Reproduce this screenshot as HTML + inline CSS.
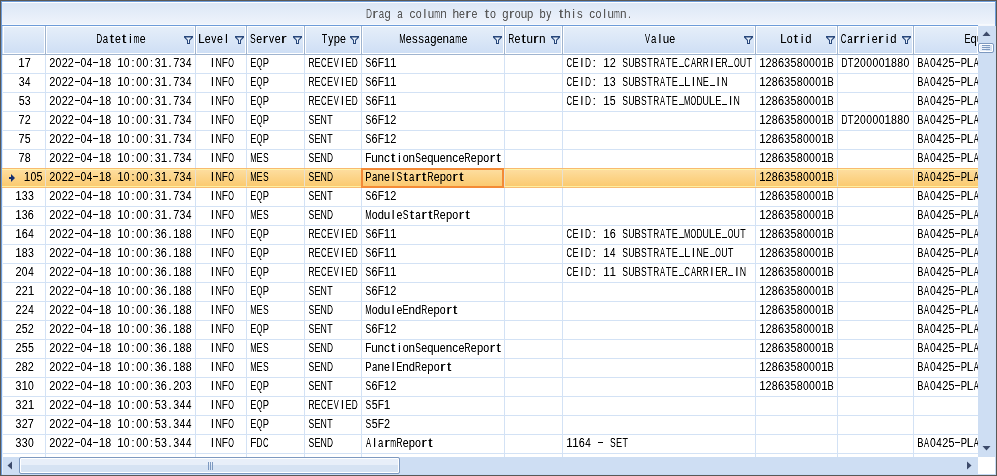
<!DOCTYPE html>
<html><head><meta charset="utf-8"><style>
html,body{margin:0;padding:0;background:#fff;width:997px;height:476px;overflow:hidden}
#r{position:relative;width:997px;height:476px;overflow:hidden}
#r div,#r svg{position:absolute;box-sizing:content-box}
#tx{position:absolute;left:0;top:0;overflow:hidden;filter:grayscale(1)}
</style></head><body><div id="r">
<div style="left:2px;top:2px;width:993px;height:1px;background:#ffffff;"></div>
<div style="left:2px;top:3px;width:993px;height:21px;background:linear-gradient(#dce7f6,#eef3fb);"></div>
<div style="left:2px;top:24px;width:993px;height:1px;background:#f6f9fd;"></div>
<div style="left:2px;top:25px;width:976px;height:1px;background:#6d9cd9;"></div>
<div style="left:3px;top:26px;width:42px;height:28px;background:#ffffff;"></div>
<div style="left:4px;top:27px;width:40px;height:26px;background:linear-gradient(#e5eef9,#cfdff5);"></div>
<div style="left:45px;top:26px;width:1px;height:29px;background:#9fb4cf;"></div>
<div style="left:46px;top:26px;width:149px;height:28px;background:#ffffff;"></div>
<div style="left:47px;top:27px;width:147px;height:26px;background:linear-gradient(#e5eef9,#cfdff5);"></div>
<div style="left:195px;top:26px;width:1px;height:29px;background:#9fb4cf;"></div>
<div style="left:196px;top:26px;width:50px;height:28px;background:#ffffff;"></div>
<div style="left:197px;top:27px;width:48px;height:26px;background:linear-gradient(#e5eef9,#cfdff5);"></div>
<div style="left:246px;top:26px;width:1px;height:29px;background:#9fb4cf;"></div>
<div style="left:247px;top:26px;width:57px;height:28px;background:#ffffff;"></div>
<div style="left:248px;top:27px;width:55px;height:26px;background:linear-gradient(#e5eef9,#cfdff5);"></div>
<div style="left:304px;top:26px;width:1px;height:29px;background:#9fb4cf;"></div>
<div style="left:305px;top:26px;width:56px;height:28px;background:#ffffff;"></div>
<div style="left:306px;top:27px;width:54px;height:26px;background:linear-gradient(#e5eef9,#cfdff5);"></div>
<div style="left:361px;top:26px;width:1px;height:29px;background:#9fb4cf;"></div>
<div style="left:362px;top:26px;width:142px;height:28px;background:#ffffff;"></div>
<div style="left:363px;top:27px;width:140px;height:26px;background:linear-gradient(#e5eef9,#cfdff5);"></div>
<div style="left:504px;top:26px;width:1px;height:29px;background:#9fb4cf;"></div>
<div style="left:505px;top:26px;width:57px;height:28px;background:#ffffff;"></div>
<div style="left:506px;top:27px;width:55px;height:26px;background:linear-gradient(#e5eef9,#cfdff5);"></div>
<div style="left:562px;top:26px;width:1px;height:29px;background:#9fb4cf;"></div>
<div style="left:563px;top:26px;width:192px;height:28px;background:#ffffff;"></div>
<div style="left:564px;top:27px;width:190px;height:26px;background:linear-gradient(#e5eef9,#cfdff5);"></div>
<div style="left:755px;top:26px;width:1px;height:29px;background:#9fb4cf;"></div>
<div style="left:756px;top:26px;width:81px;height:28px;background:#ffffff;"></div>
<div style="left:757px;top:27px;width:79px;height:26px;background:linear-gradient(#e5eef9,#cfdff5);"></div>
<div style="left:837px;top:26px;width:1px;height:29px;background:#9fb4cf;"></div>
<div style="left:838px;top:26px;width:75px;height:28px;background:#ffffff;"></div>
<div style="left:839px;top:27px;width:73px;height:26px;background:linear-gradient(#e5eef9,#cfdff5);"></div>
<div style="left:913px;top:26px;width:1px;height:29px;background:#9fb4cf;"></div>
<div style="left:914px;top:26px;width:64px;height:28px;background:#ffffff;"></div>
<div style="left:915px;top:27px;width:62px;height:26px;background:linear-gradient(#e5eef9,#cfdff5);"></div>
<div style="left:2px;top:26px;width:1px;height:29px;background:#c4d6ee;"></div>
<div style="left:2px;top:54px;width:976px;height:1px;background:#9fb4cf;"></div>
<svg class="f" style="left:184px;top:36px" width="9" height="8" viewBox="0 0 9 8"><path d="M0 0H9V1.6L6 4.6V8H3V4.6L0 1.6Z" fill="#27467a"/><path d="M1.6 1.6H7.4L5 4.1V7H4V4.1Z" fill="#e3edf9"/></svg>
<svg class="f" style="left:235px;top:36px" width="9" height="8" viewBox="0 0 9 8"><path d="M0 0H9V1.6L6 4.6V8H3V4.6L0 1.6Z" fill="#27467a"/><path d="M1.6 1.6H7.4L5 4.1V7H4V4.1Z" fill="#e3edf9"/></svg>
<svg class="f" style="left:293px;top:36px" width="9" height="8" viewBox="0 0 9 8"><path d="M0 0H9V1.6L6 4.6V8H3V4.6L0 1.6Z" fill="#27467a"/><path d="M1.6 1.6H7.4L5 4.1V7H4V4.1Z" fill="#e3edf9"/></svg>
<svg class="f" style="left:350px;top:36px" width="9" height="8" viewBox="0 0 9 8"><path d="M0 0H9V1.6L6 4.6V8H3V4.6L0 1.6Z" fill="#27467a"/><path d="M1.6 1.6H7.4L5 4.1V7H4V4.1Z" fill="#e3edf9"/></svg>
<svg class="f" style="left:493px;top:36px" width="9" height="8" viewBox="0 0 9 8"><path d="M0 0H9V1.6L6 4.6V8H3V4.6L0 1.6Z" fill="#27467a"/><path d="M1.6 1.6H7.4L5 4.1V7H4V4.1Z" fill="#e3edf9"/></svg>
<svg class="f" style="left:551px;top:36px" width="9" height="8" viewBox="0 0 9 8"><path d="M0 0H9V1.6L6 4.6V8H3V4.6L0 1.6Z" fill="#27467a"/><path d="M1.6 1.6H7.4L5 4.1V7H4V4.1Z" fill="#e3edf9"/></svg>
<svg class="f" style="left:744px;top:36px" width="9" height="8" viewBox="0 0 9 8"><path d="M0 0H9V1.6L6 4.6V8H3V4.6L0 1.6Z" fill="#27467a"/><path d="M1.6 1.6H7.4L5 4.1V7H4V4.1Z" fill="#e3edf9"/></svg>
<svg class="f" style="left:826px;top:36px" width="9" height="8" viewBox="0 0 9 8"><path d="M0 0H9V1.6L6 4.6V8H3V4.6L0 1.6Z" fill="#27467a"/><path d="M1.6 1.6H7.4L5 4.1V7H4V4.1Z" fill="#e3edf9"/></svg>
<svg class="f" style="left:902px;top:36px" width="9" height="8" viewBox="0 0 9 8"><path d="M0 0H9V1.6L6 4.6V8H3V4.6L0 1.6Z" fill="#27467a"/><path d="M1.6 1.6H7.4L5 4.1V7H4V4.1Z" fill="#e3edf9"/></svg>
<div style="left:2px;top:73px;width:976px;height:1px;background:#d3e2f5;"></div>
<div style="left:2px;top:92px;width:976px;height:1px;background:#d3e2f5;"></div>
<div style="left:2px;top:111px;width:976px;height:1px;background:#d3e2f5;"></div>
<div style="left:2px;top:130px;width:976px;height:1px;background:#d3e2f5;"></div>
<div style="left:2px;top:149px;width:976px;height:1px;background:#d3e2f5;"></div>
<div style="left:2px;top:168px;width:976px;height:1px;background:#d3e2f5;"></div>
<div style="left:2px;top:187px;width:976px;height:1px;background:#d3e2f5;"></div>
<div style="left:2px;top:206px;width:976px;height:1px;background:#d3e2f5;"></div>
<div style="left:2px;top:225px;width:976px;height:1px;background:#d3e2f5;"></div>
<div style="left:2px;top:244px;width:976px;height:1px;background:#d3e2f5;"></div>
<div style="left:2px;top:263px;width:976px;height:1px;background:#d3e2f5;"></div>
<div style="left:2px;top:282px;width:976px;height:1px;background:#d3e2f5;"></div>
<div style="left:2px;top:301px;width:976px;height:1px;background:#d3e2f5;"></div>
<div style="left:2px;top:320px;width:976px;height:1px;background:#d3e2f5;"></div>
<div style="left:2px;top:339px;width:976px;height:1px;background:#d3e2f5;"></div>
<div style="left:2px;top:358px;width:976px;height:1px;background:#d3e2f5;"></div>
<div style="left:2px;top:377px;width:976px;height:1px;background:#d3e2f5;"></div>
<div style="left:2px;top:396px;width:976px;height:1px;background:#d3e2f5;"></div>
<div style="left:2px;top:415px;width:976px;height:1px;background:#d3e2f5;"></div>
<div style="left:2px;top:434px;width:976px;height:1px;background:#d3e2f5;"></div>
<div style="left:2px;top:453px;width:976px;height:1px;background:#d3e2f5;"></div>
<div style="left:45px;top:55px;width:1px;height:402px;background:#d3e2f5;"></div>
<div style="left:195px;top:55px;width:1px;height:402px;background:#d3e2f5;"></div>
<div style="left:246px;top:55px;width:1px;height:402px;background:#d3e2f5;"></div>
<div style="left:304px;top:55px;width:1px;height:402px;background:#d3e2f5;"></div>
<div style="left:361px;top:55px;width:1px;height:402px;background:#d3e2f5;"></div>
<div style="left:504px;top:55px;width:1px;height:402px;background:#d3e2f5;"></div>
<div style="left:562px;top:55px;width:1px;height:402px;background:#d3e2f5;"></div>
<div style="left:755px;top:55px;width:1px;height:402px;background:#d3e2f5;"></div>
<div style="left:837px;top:55px;width:1px;height:402px;background:#d3e2f5;"></div>
<div style="left:913px;top:55px;width:1px;height:402px;background:#d3e2f5;"></div>
<div style="left:2px;top:55px;width:1px;height:402px;background:#e4eefa;"></div>
<div style="left:2px;top:168px;width:976px;height:1px;background:#f8bb70;"></div>
<div style="left:2px;top:169px;width:976px;height:1px;background:#fff4a8;"></div>
<div style="left:2px;top:170px;width:976px;height:16px;background:linear-gradient(#fddd9e,#fbca70);"></div>
<div style="left:2px;top:186px;width:976px;height:1px;background:#ffefa0;"></div>
<div style="left:2px;top:187px;width:976px;height:1px;background:#f8bd72;"></div>
<div style="left:45px;top:169px;width:1px;height:18px;background:#e8e0d0;"></div>
<div style="left:195px;top:169px;width:1px;height:18px;background:#e8e0d0;"></div>
<div style="left:246px;top:169px;width:1px;height:18px;background:#e8e0d0;"></div>
<div style="left:304px;top:169px;width:1px;height:18px;background:#e8e0d0;"></div>
<div style="left:361px;top:169px;width:1px;height:18px;background:#e8e0d0;"></div>
<div style="left:504px;top:169px;width:1px;height:18px;background:#e8e0d0;"></div>
<div style="left:562px;top:169px;width:1px;height:18px;background:#e8e0d0;"></div>
<div style="left:755px;top:169px;width:1px;height:18px;background:#e8e0d0;"></div>
<div style="left:837px;top:169px;width:1px;height:18px;background:#e8e0d0;"></div>
<div style="left:913px;top:169px;width:1px;height:18px;background:#e8e0d0;"></div>
<div style="left:361px;top:168px;width:139px;height:16px;border:2px solid #f38a36"></div>
<svg style="position:absolute;left:9px;top:174px" width="7" height="8" viewBox="0 0 7 8"><path d="M2 0L6 4L2 8V5H0V3H2Z" fill="#142c70"/></svg>
<div style="left:978px;top:26px;width:17px;height:431px;background:#cedef3;"></div>
<div style="left:978px;top:25px;width:17px;height:1px;background:#f4f7fc;"></div>
<svg style="position:absolute;left:982px;top:31px" width="9" height="6" viewBox="0 0 9 6"><path d="M4.5 0.5L8.5 5H0.5Z" fill="#3d4b6b"/></svg>
<svg style="position:absolute;left:982px;top:445px" width="9" height="6" viewBox="0 0 9 6"><path d="M4.5 5.5L8.5 1H0.5Z" fill="#3d4b6b"/></svg>
<div style="left:978px;top:43px;width:14px;height:8px;border:1px solid #7d99c0;border-radius:2px;background:linear-gradient(90deg,#e8eff9 50%,#d6e3f3 50%);box-shadow:inset 0 0 0 1px #fff"></div>
<div style="left:982px;top:45px;width:8px;height:1px;background:#7d99c0;"></div>
<div style="left:982px;top:47px;width:8px;height:1px;background:#7d99c0;"></div>
<div style="left:982px;top:49px;width:8px;height:1px;background:#7d99c0;"></div>
<div style="left:2px;top:457px;width:976px;height:18px;background:#cedef3;"></div>
<svg style="position:absolute;left:7px;top:461px" width="6" height="9" viewBox="0 0 6 9"><path d="M0.5 4.5L5 0.5V8.5Z" fill="#3d4b6b"/></svg>
<svg style="position:absolute;left:966px;top:461px" width="6" height="9" viewBox="0 0 6 9"><path d="M5.5 4.5L1 0.5V8.5Z" fill="#3d4b6b"/></svg>
<div style="left:19px;top:457px;width:379px;height:15px;border:1px solid #7d99c0;border-radius:2px;background:linear-gradient(#e8eff9 50%,#d6e3f3 50%);box-shadow:inset 0 0 0 1px #fff"></div>
<div style="left:208px;top:462px;width:1px;height:8px;background:#7d99c0;"></div>
<div style="left:210px;top:462px;width:1px;height:8px;background:#7d99c0;"></div>
<div style="left:212px;top:462px;width:1px;height:8px;background:#7d99c0;"></div>
<div style="left:978px;top:457px;width:17px;height:17px;background:#ffffff;"></div>
<div style="left:0px;top:0px;width:997px;height:1px;background:#5a5855;"></div>
<div style="left:0px;top:475px;width:997px;height:1px;background:#5a5855;"></div>
<div style="left:0px;top:0px;width:1px;height:476px;background:#5a5855;"></div>
<div style="left:996px;top:0px;width:1px;height:476px;background:#5a5855;"></div>
<div style="left:1px;top:1px;width:995px;height:1px;background:#6d9cd9;"></div>
<div style="left:2px;top:474px;width:994px;height:1px;background:#c6daf5;"></div>
<div style="left:1px;top:1px;width:1px;height:474px;background:#6d9cd9;"></div>
<div style="left:995px;top:1px;width:1px;height:25px;background:#6d9cd9;"></div>
<div style="left:995px;top:26px;width:1px;height:448px;background:#c9dcf5;"></div>
<div style="left:2px;top:457px;width:1px;height:17px;background:#e6eef9;"></div>
<svg id="tx" width="978" height="457" viewBox="0 0 978 457"><defs><filter id="sh"><feComponentTransfer><feFuncA type="linear" slope="1.3" intercept="-0.1"/></feComponentTransfer></filter></defs><g font-family="Liberation Sans" font-size="13" text-anchor="middle" filter="url(#sh)">
<text transform="scale(0.64,1)" x="576.56" y="18" fill="#555a62">D</text>
<text transform="scale(1.32,1)" x="284.24 354.70 387.58" y="18" fill="#555a62">rrr</text>
<text transform="scale(0.74,1)" x="515.41 540.54" y="18" fill="#555a62">aa</text>
<text transform="scale(0.86,1)" x="450.70 587.67 616.51 630.93" y="18" fill="#555a62">ggpb</text>
<text transform="scale(0.9,1)" x="458.22 478.89 492.67 582.22 658.00 678.67 692.44" y="18" fill="#555a62">cunucun</text>
<text transform="scale(0.82,1)" x="510.49 563.41 578.54 601.22 631.46 729.76" y="18" fill="#555a62">oeeooo</text>
<text transform="scale(0.96,1)" x="442.50 597.50 629.79 655.62" y="18" fill="#555a62">lil.</text>
<text transform="scale(0.54,1)" x="809.63 1142.59" y="18" fill="#555a62">mm</text>
<text transform="scale(0.92,1)" x="495.43 616.74" y="18" fill="#555a62">hh</text>
<text transform="scale(1.3,1)" x="374.46 431.69" y="18" fill="#555a62">tt</text>
<text transform="scale(0.78,1)" x="703.59" y="18" fill="#555a62">y</text>
<text transform="scale(0.88,1)" x="658.86" y="18" fill="#555a62">s</text>
<text transform="scale(0.64,1)" x="155.23" y="43">D</text>
<text transform="scale(0.74,1)" x="142.64" y="43">a</text>
<text transform="scale(1.3,1)" x="85.96 95.50" y="43">tt</text>
<text transform="scale(0.82,1)" x="143.84 174.09" y="43">ee</text>
<text transform="scale(0.96,1)" x="135.78" y="43">i</text>
<text transform="scale(0.54,1)" x="252.87" y="43">m</text>
<text transform="scale(0.88,1)" x="228.98" y="43">L</text>
<text transform="scale(0.82,1)" x="253.29 268.41" y="43">ee</text>
<text transform="scale(0.78,1)" x="274.23" y="43">v</text>
<text transform="scale(0.96,1)" x="235.73" y="43">l</text>
<text transform="scale(0.66,1)" x="383.18" y="43">S</text>
<text transform="scale(0.82,1)" x="315.98 338.66" y="43">ee</text>
<text transform="scale(1.32,1)" x="200.98 215.08" y="43">rr</text>
<text transform="scale(0.78,1)" x="348.08" y="43">v</text>
<text transform="scale(0.68,1)" x="477.21" y="43">T</text>
<text transform="scale(0.78,1)" x="423.97" y="43">y</text>
<text transform="scale(0.86,1)" x="391.74" y="43">p</text>
<text transform="scale(0.82,1)" x="418.41" y="43">e</text>
<text transform="scale(0.58,1)" x="693.79" y="43">M</text>
<text transform="scale(0.82,1)" x="498.29 536.10 566.34" y="43">eee</text>
<text transform="scale(0.88,1)" x="471.36 478.41" y="43">ss</text>
<text transform="scale(0.74,1)" x="577.30 610.81" y="43">aa</text>
<text transform="scale(0.86,1)" x="503.95" y="43">g</text>
<text transform="scale(0.9,1)" x="495.33" y="43">n</text>
<text transform="scale(0.54,1)" x="848.52" y="43">m</text>
<text transform="scale(0.64,1)" x="798.75" y="43">R</text>
<text transform="scale(0.82,1)" x="630.98" y="43">e</text>
<text transform="scale(1.3,1)" x="402.77" y="43">t</text>
<text transform="scale(0.9,1)" x="588.67 602.44" y="43">un</text>
<text transform="scale(1.32,1)" x="406.06" y="43">r</text>
<text transform="scale(0.58,1)" x="1116.38" y="43">V</text>
<text transform="scale(0.74,1)" x="883.38" y="43">a</text>
<text transform="scale(0.96,1)" x="687.40" y="43">l</text>
<text transform="scale(0.9,1)" x="740.11" y="43">u</text>
<text transform="scale(0.82,1)" x="819.88" y="43">e</text>
<text transform="scale(0.88,1)" x="890.34" y="43">L</text>
<text transform="scale(0.82,1)" x="963.05" y="43">o</text>
<text transform="scale(1.3,1)" x="612.23" y="43">t</text>
<text transform="scale(0.96,1)" x="835.52" y="43">i</text>
<text transform="scale(0.86,1)" x="939.88" y="43">d</text>
<text transform="scale(0.6,1)" x="1406.17" y="43">C</text>
<text transform="scale(0.74,1)" x="1148.51" y="43">a</text>
<text transform="scale(1.32,1)" x="648.56 653.26 667.35" y="43">rrr</text>
<text transform="scale(0.96,1)" x="904.69 924.06" y="43">ii</text>
<text transform="scale(0.82,1)" x="1066.71" y="43">e</text>
<text transform="scale(0.86,1)" x="1038.72" y="43">d</text>
<text transform="scale(0.7,1)" x="1382.14" y="43">E</text>
<text transform="scale(0.86,1)" x="1132.21 1153.84 1197.09" y="43">qpd</text>
<text transform="scale(0.9,1)" x="1088.78 1123.22" y="43">un</text>
<text transform="scale(0.96,1)" x="1027.19 1065.94" y="43">ii</text>
<text transform="scale(0.54,1)" x="1849.07" y="43">m</text>
<text transform="scale(0.82,1)" x="1225.24" y="43">e</text>
<text transform="scale(1.3,1)" x="782.38" y="43">t</text>
<text transform="scale(0.9,1)" x="24.00" y="67">1</text>
<text transform="scale(0.84,1)" x="33.10" y="67">7</text>
<rect x="75" y="62" width="5" height="1" fill="#000"/>
<rect x="93" y="62" width="5" height="1" fill="#000"/>
<text transform="scale(0.84,1)" x="62.26 77.02 84.40 209.88" y="67">2227</text>
<text transform="scale(0.8,1)" x="73.12 104.12 158.38 173.87 181.62" y="67">00000</text>
<text transform="scale(0.76,1)" x="117.76 248.29" y="67">44</text>
<text transform="scale(0.9,1)" x="113.22 133.89 182.11" y="67">111</text>
<text transform="scale(0.82,1)" x="131.83 192.32 222.56" y="67">833</text>
<text transform="scale(0.96,1)" x="138.44 157.81 177.19" y="67">::.</text>
<text transform="scale(0.9,1)" x="236.11" y="67">I</text>
<text transform="scale(0.68,1)" x="321.62" y="67">N</text>
<text transform="scale(0.78,1)" x="288.33" y="67">F</text>
<text transform="scale(0.56,1)" x="412.68" y="67">O</text>
<text transform="scale(0.7,1)" x="362.00" y="67">E</text>
<text transform="scale(0.56,1)" x="463.57" y="67">Q</text>
<text transform="scale(0.72,1)" x="369.17" y="67">P</text>
<text transform="scale(0.64,1)" x="486.56 554.38" y="67">RD</text>
<text transform="scale(0.7,1)" x="453.71 471.43 498.00" y="67">EEE</text>
<text transform="scale(0.6,1)" x="539.67" y="67">C</text>
<text transform="scale(0.58,1)" x="579.66" y="67">V</text>
<text transform="scale(0.9,1)" x="380.44" y="67">I</text>
<text transform="scale(0.66,1)" x="558.18" y="67">S</text>
<text transform="scale(0.84,1)" x="445.95" y="67">6</text>
<text transform="scale(0.78,1)" x="488.21" y="67">F</text>
<text transform="scale(0.9,1)" x="430.00 436.89" y="67">11</text>
<rect x="679" y="66" width="5" height="1" fill="#000"/>
<rect x="728" y="66" width="5" height="1" fill="#000"/>
<text transform="scale(0.6,1)" x="949.00 1145.33" y="67">CC</text>
<text transform="scale(0.7,1)" x="822.29 964.00 1026.00" y="67">EEE</text>
<text transform="scale(0.9,1)" x="646.44 674.00 791.11" y="67">I1I</text>
<text transform="scale(0.64,1)" x="918.75 1025.31 1093.12 1102.81 1131.88" y="67">DRRRR</text>
<text transform="scale(0.96,1)" x="618.96" y="67">:</text>
<text transform="scale(0.84,1)" x="729.52" y="67">2</text>
<text transform="scale(0.66,1)" x="947.27 975.45" y="67">SS</text>
<text transform="scale(0.68,1)" x="928.53 955.88 983.24 1092.65 1101.76" y="67">UTTUT</text>
<text transform="scale(0.72,1)" x="885.56" y="67">B</text>
<text transform="scale(0.58,1)" x="1142.07 1195.52" y="67">AA</text>
<text transform="scale(0.56,1)" x="1315.71" y="67">O</text>
<text transform="scale(0.9,1)" x="847.11 916.00" y="67">11</text>
<text transform="scale(0.84,1)" x="915.00 929.76" y="67">26</text>
<text transform="scale(0.82,1)" x="944.88 960.00 967.56 975.12" y="67">8358</text>
<text transform="scale(0.8,1)" x="1007.25 1015.00 1022.75" y="67">000</text>
<text transform="scale(0.72,1)" x="1153.61" y="67">B</text>
<text transform="scale(0.64,1)" x="1319.38" y="67">D</text>
<text transform="scale(0.68,1)" x="1250.88" y="67">T</text>
<text transform="scale(0.84,1)" x="1020.00" y="67">2</text>
<text transform="scale(0.8,1)" x="1078.75 1086.50 1094.25 1102.00 1133.00" y="67">00000</text>
<text transform="scale(0.9,1)" x="986.44" y="67">1</text>
<text transform="scale(0.82,1)" x="1090.24 1097.80" y="67">88</text>
<rect x="955" y="62" width="5" height="1" fill="#000"/>
<text transform="scale(0.72,1)" x="1278.33 1338.61" y="67">BP</text>
<text transform="scale(0.58,1)" x="1597.59 1683.10" y="67">AA</text>
<text transform="scale(0.8,1)" x="1166.00" y="67">0</text>
<text transform="scale(0.76,1)" x="1235.53" y="67">4</text>
<text transform="scale(0.84,1)" x="1125.24" y="67">2</text>
<text transform="scale(0.82,1)" x="1160.24" y="67">5</text>
<text transform="scale(0.88,1)" x="1102.27" y="67">L</text>
<text transform="scale(0.82,1)" x="26.34" y="86">3</text>
<text transform="scale(0.76,1)" x="36.58" y="86">4</text>
<rect x="75" y="81" width="5" height="1" fill="#000"/>
<rect x="93" y="81" width="5" height="1" fill="#000"/>
<text transform="scale(0.84,1)" x="62.26 77.02 84.40 209.88" y="86">2227</text>
<text transform="scale(0.8,1)" x="73.12 104.12 158.38 173.87 181.62" y="86">00000</text>
<text transform="scale(0.76,1)" x="117.76 248.29" y="86">44</text>
<text transform="scale(0.9,1)" x="113.22 133.89 182.11" y="86">111</text>
<text transform="scale(0.82,1)" x="131.83 192.32 222.56" y="86">833</text>
<text transform="scale(0.96,1)" x="138.44 157.81 177.19" y="86">::.</text>
<text transform="scale(0.9,1)" x="236.11" y="86">I</text>
<text transform="scale(0.68,1)" x="321.62" y="86">N</text>
<text transform="scale(0.78,1)" x="288.33" y="86">F</text>
<text transform="scale(0.56,1)" x="412.68" y="86">O</text>
<text transform="scale(0.7,1)" x="362.00" y="86">E</text>
<text transform="scale(0.56,1)" x="463.57" y="86">Q</text>
<text transform="scale(0.72,1)" x="369.17" y="86">P</text>
<text transform="scale(0.64,1)" x="486.56 554.38" y="86">RD</text>
<text transform="scale(0.7,1)" x="453.71 471.43 498.00" y="86">EEE</text>
<text transform="scale(0.6,1)" x="539.67" y="86">C</text>
<text transform="scale(0.58,1)" x="579.66" y="86">V</text>
<text transform="scale(0.9,1)" x="380.44" y="86">I</text>
<text transform="scale(0.66,1)" x="558.18" y="86">S</text>
<text transform="scale(0.84,1)" x="445.95" y="86">6</text>
<text transform="scale(0.78,1)" x="488.21" y="86">F</text>
<text transform="scale(0.9,1)" x="430.00 436.89" y="86">11</text>
<rect x="679" y="85" width="5" height="1" fill="#000"/>
<rect x="710" y="85" width="5" height="1" fill="#000"/>
<text transform="scale(0.6,1)" x="949.00" y="86">C</text>
<text transform="scale(0.7,1)" x="822.29 964.00 1008.29" y="86">EEE</text>
<text transform="scale(0.9,1)" x="646.44 674.00 770.44 798.00" y="86">I1II</text>
<text transform="scale(0.64,1)" x="918.75 1025.31" y="86">DR</text>
<text transform="scale(0.96,1)" x="618.96" y="86">:</text>
<text transform="scale(0.82,1)" x="747.32" y="86">3</text>
<text transform="scale(0.66,1)" x="947.27 975.45" y="86">SS</text>
<text transform="scale(0.68,1)" x="928.53 955.88 983.24 1028.82 1065.29" y="86">UTTNN</text>
<text transform="scale(0.72,1)" x="885.56" y="86">B</text>
<text transform="scale(0.58,1)" x="1142.07" y="86">A</text>
<text transform="scale(0.88,1)" x="780.91" y="86">L</text>
<text transform="scale(0.9,1)" x="847.11 916.00" y="86">11</text>
<text transform="scale(0.84,1)" x="915.00 929.76" y="86">26</text>
<text transform="scale(0.82,1)" x="944.88 960.00 967.56 975.12" y="86">8358</text>
<text transform="scale(0.8,1)" x="1007.25 1015.00 1022.75" y="86">000</text>
<text transform="scale(0.72,1)" x="1153.61" y="86">B</text>
<rect x="955" y="81" width="5" height="1" fill="#000"/>
<text transform="scale(0.72,1)" x="1278.33 1338.61" y="86">BP</text>
<text transform="scale(0.58,1)" x="1597.59 1683.10" y="86">AA</text>
<text transform="scale(0.8,1)" x="1166.00" y="86">0</text>
<text transform="scale(0.76,1)" x="1235.53" y="86">4</text>
<text transform="scale(0.84,1)" x="1125.24" y="86">2</text>
<text transform="scale(0.82,1)" x="1160.24" y="86">5</text>
<text transform="scale(0.88,1)" x="1102.27" y="86">L</text>
<text transform="scale(0.82,1)" x="26.34 33.90" y="105">53</text>
<rect x="75" y="100" width="5" height="1" fill="#000"/>
<rect x="93" y="100" width="5" height="1" fill="#000"/>
<text transform="scale(0.84,1)" x="62.26 77.02 84.40 209.88" y="105">2227</text>
<text transform="scale(0.8,1)" x="73.12 104.12 158.38 173.87 181.62" y="105">00000</text>
<text transform="scale(0.76,1)" x="117.76 248.29" y="105">44</text>
<text transform="scale(0.9,1)" x="113.22 133.89 182.11" y="105">111</text>
<text transform="scale(0.82,1)" x="131.83 192.32 222.56" y="105">833</text>
<text transform="scale(0.96,1)" x="138.44 157.81 177.19" y="105">::.</text>
<text transform="scale(0.9,1)" x="236.11" y="105">I</text>
<text transform="scale(0.68,1)" x="321.62" y="105">N</text>
<text transform="scale(0.78,1)" x="288.33" y="105">F</text>
<text transform="scale(0.56,1)" x="412.68" y="105">O</text>
<text transform="scale(0.7,1)" x="362.00" y="105">E</text>
<text transform="scale(0.56,1)" x="463.57" y="105">Q</text>
<text transform="scale(0.72,1)" x="369.17" y="105">P</text>
<text transform="scale(0.64,1)" x="486.56 554.38" y="105">RD</text>
<text transform="scale(0.7,1)" x="453.71 471.43 498.00" y="105">EEE</text>
<text transform="scale(0.6,1)" x="539.67" y="105">C</text>
<text transform="scale(0.58,1)" x="579.66" y="105">V</text>
<text transform="scale(0.9,1)" x="380.44" y="105">I</text>
<text transform="scale(0.66,1)" x="558.18" y="105">S</text>
<text transform="scale(0.84,1)" x="445.95" y="105">6</text>
<text transform="scale(0.78,1)" x="488.21" y="105">F</text>
<text transform="scale(0.9,1)" x="430.00 436.89" y="105">11</text>
<rect x="679" y="104" width="5" height="1" fill="#000"/>
<rect x="722" y="104" width="5" height="1" fill="#000"/>
<text transform="scale(0.6,1)" x="949.00" y="105">C</text>
<text transform="scale(0.7,1)" x="822.29 964.00 1026.00" y="105">EEE</text>
<text transform="scale(0.9,1)" x="646.44 674.00 811.78" y="105">I1I</text>
<text transform="scale(0.64,1)" x="918.75 1025.31 1093.12" y="105">DRD</text>
<text transform="scale(0.96,1)" x="618.96" y="105">:</text>
<text transform="scale(0.82,1)" x="747.32" y="105">5</text>
<text transform="scale(0.66,1)" x="947.27 975.45" y="105">SS</text>
<text transform="scale(0.68,1)" x="928.53 955.88 983.24 1037.94 1083.53" y="105">UTTUN</text>
<text transform="scale(0.72,1)" x="885.56" y="105">B</text>
<text transform="scale(0.58,1)" x="1142.07 1184.83" y="105">AM</text>
<text transform="scale(0.56,1)" x="1238.21" y="105">O</text>
<text transform="scale(0.88,1)" x="809.09" y="105">L</text>
<text transform="scale(0.9,1)" x="847.11 916.00" y="105">11</text>
<text transform="scale(0.84,1)" x="915.00 929.76" y="105">26</text>
<text transform="scale(0.82,1)" x="944.88 960.00 967.56 975.12" y="105">8358</text>
<text transform="scale(0.8,1)" x="1007.25 1015.00 1022.75" y="105">000</text>
<text transform="scale(0.72,1)" x="1153.61" y="105">B</text>
<rect x="955" y="100" width="5" height="1" fill="#000"/>
<text transform="scale(0.72,1)" x="1278.33 1338.61" y="105">BP</text>
<text transform="scale(0.58,1)" x="1597.59 1683.10" y="105">AA</text>
<text transform="scale(0.8,1)" x="1166.00" y="105">0</text>
<text transform="scale(0.76,1)" x="1235.53" y="105">4</text>
<text transform="scale(0.84,1)" x="1125.24" y="105">2</text>
<text transform="scale(0.82,1)" x="1160.24" y="105">5</text>
<text transform="scale(0.88,1)" x="1102.27" y="105">L</text>
<text transform="scale(0.84,1)" x="25.71 33.10" y="124">72</text>
<rect x="75" y="119" width="5" height="1" fill="#000"/>
<rect x="93" y="119" width="5" height="1" fill="#000"/>
<text transform="scale(0.84,1)" x="62.26 77.02 84.40 209.88" y="124">2227</text>
<text transform="scale(0.8,1)" x="73.12 104.12 158.38 173.87 181.62" y="124">00000</text>
<text transform="scale(0.76,1)" x="117.76 248.29" y="124">44</text>
<text transform="scale(0.9,1)" x="113.22 133.89 182.11" y="124">111</text>
<text transform="scale(0.82,1)" x="131.83 192.32 222.56" y="124">833</text>
<text transform="scale(0.96,1)" x="138.44 157.81 177.19" y="124">::.</text>
<text transform="scale(0.9,1)" x="236.11" y="124">I</text>
<text transform="scale(0.68,1)" x="321.62" y="124">N</text>
<text transform="scale(0.78,1)" x="288.33" y="124">F</text>
<text transform="scale(0.56,1)" x="412.68" y="124">O</text>
<text transform="scale(0.7,1)" x="362.00" y="124">E</text>
<text transform="scale(0.56,1)" x="463.57" y="124">Q</text>
<text transform="scale(0.72,1)" x="369.17" y="124">P</text>
<text transform="scale(0.66,1)" x="471.82" y="124">S</text>
<text transform="scale(0.7,1)" x="453.71" y="124">E</text>
<text transform="scale(0.68,1)" x="476.18 485.29" y="124">NT</text>
<text transform="scale(0.66,1)" x="558.18" y="124">S</text>
<text transform="scale(0.84,1)" x="445.95 468.10" y="124">62</text>
<text transform="scale(0.78,1)" x="488.21" y="124">F</text>
<text transform="scale(0.9,1)" x="430.00" y="124">1</text>
<text transform="scale(0.9,1)" x="847.11 916.00" y="124">11</text>
<text transform="scale(0.84,1)" x="915.00 929.76" y="124">26</text>
<text transform="scale(0.82,1)" x="944.88 960.00 967.56 975.12" y="124">8358</text>
<text transform="scale(0.8,1)" x="1007.25 1015.00 1022.75" y="124">000</text>
<text transform="scale(0.72,1)" x="1153.61" y="124">B</text>
<text transform="scale(0.64,1)" x="1319.38" y="124">D</text>
<text transform="scale(0.68,1)" x="1250.88" y="124">T</text>
<text transform="scale(0.84,1)" x="1020.00" y="124">2</text>
<text transform="scale(0.8,1)" x="1078.75 1086.50 1094.25 1102.00 1133.00" y="124">00000</text>
<text transform="scale(0.9,1)" x="986.44" y="124">1</text>
<text transform="scale(0.82,1)" x="1090.24 1097.80" y="124">88</text>
<rect x="955" y="119" width="5" height="1" fill="#000"/>
<text transform="scale(0.72,1)" x="1278.33 1338.61" y="124">BP</text>
<text transform="scale(0.58,1)" x="1597.59 1683.10" y="124">AA</text>
<text transform="scale(0.8,1)" x="1166.00" y="124">0</text>
<text transform="scale(0.76,1)" x="1235.53" y="124">4</text>
<text transform="scale(0.84,1)" x="1125.24" y="124">2</text>
<text transform="scale(0.82,1)" x="1160.24" y="124">5</text>
<text transform="scale(0.88,1)" x="1102.27" y="124">L</text>
<text transform="scale(0.84,1)" x="25.71" y="143">7</text>
<text transform="scale(0.82,1)" x="33.90" y="143">5</text>
<rect x="75" y="138" width="5" height="1" fill="#000"/>
<rect x="93" y="138" width="5" height="1" fill="#000"/>
<text transform="scale(0.84,1)" x="62.26 77.02 84.40 209.88" y="143">2227</text>
<text transform="scale(0.8,1)" x="73.12 104.12 158.38 173.87 181.62" y="143">00000</text>
<text transform="scale(0.76,1)" x="117.76 248.29" y="143">44</text>
<text transform="scale(0.9,1)" x="113.22 133.89 182.11" y="143">111</text>
<text transform="scale(0.82,1)" x="131.83 192.32 222.56" y="143">833</text>
<text transform="scale(0.96,1)" x="138.44 157.81 177.19" y="143">::.</text>
<text transform="scale(0.9,1)" x="236.11" y="143">I</text>
<text transform="scale(0.68,1)" x="321.62" y="143">N</text>
<text transform="scale(0.78,1)" x="288.33" y="143">F</text>
<text transform="scale(0.56,1)" x="412.68" y="143">O</text>
<text transform="scale(0.7,1)" x="362.00" y="143">E</text>
<text transform="scale(0.56,1)" x="463.57" y="143">Q</text>
<text transform="scale(0.72,1)" x="369.17" y="143">P</text>
<text transform="scale(0.66,1)" x="471.82" y="143">S</text>
<text transform="scale(0.7,1)" x="453.71" y="143">E</text>
<text transform="scale(0.68,1)" x="476.18 485.29" y="143">NT</text>
<text transform="scale(0.66,1)" x="558.18" y="143">S</text>
<text transform="scale(0.84,1)" x="445.95 468.10" y="143">62</text>
<text transform="scale(0.78,1)" x="488.21" y="143">F</text>
<text transform="scale(0.9,1)" x="430.00" y="143">1</text>
<text transform="scale(0.9,1)" x="847.11 916.00" y="143">11</text>
<text transform="scale(0.84,1)" x="915.00 929.76" y="143">26</text>
<text transform="scale(0.82,1)" x="944.88 960.00 967.56 975.12" y="143">8358</text>
<text transform="scale(0.8,1)" x="1007.25 1015.00 1022.75" y="143">000</text>
<text transform="scale(0.72,1)" x="1153.61" y="143">B</text>
<rect x="955" y="138" width="5" height="1" fill="#000"/>
<text transform="scale(0.72,1)" x="1278.33 1338.61" y="143">BP</text>
<text transform="scale(0.58,1)" x="1597.59 1683.10" y="143">AA</text>
<text transform="scale(0.8,1)" x="1166.00" y="143">0</text>
<text transform="scale(0.76,1)" x="1235.53" y="143">4</text>
<text transform="scale(0.84,1)" x="1125.24" y="143">2</text>
<text transform="scale(0.82,1)" x="1160.24" y="143">5</text>
<text transform="scale(0.88,1)" x="1102.27" y="143">L</text>
<text transform="scale(0.84,1)" x="25.71" y="162">7</text>
<text transform="scale(0.82,1)" x="33.90" y="162">8</text>
<rect x="75" y="157" width="5" height="1" fill="#000"/>
<rect x="93" y="157" width="5" height="1" fill="#000"/>
<text transform="scale(0.84,1)" x="62.26 77.02 84.40 209.88" y="162">2227</text>
<text transform="scale(0.8,1)" x="73.12 104.12 158.38 173.87 181.62" y="162">00000</text>
<text transform="scale(0.76,1)" x="117.76 248.29" y="162">44</text>
<text transform="scale(0.9,1)" x="113.22 133.89 182.11" y="162">111</text>
<text transform="scale(0.82,1)" x="131.83 192.32 222.56" y="162">833</text>
<text transform="scale(0.96,1)" x="138.44 157.81 177.19" y="162">::.</text>
<text transform="scale(0.9,1)" x="236.11" y="162">I</text>
<text transform="scale(0.68,1)" x="321.62" y="162">N</text>
<text transform="scale(0.78,1)" x="288.33" y="162">F</text>
<text transform="scale(0.56,1)" x="412.68" y="162">O</text>
<text transform="scale(0.58,1)" x="436.90" y="162">M</text>
<text transform="scale(0.7,1)" x="370.86" y="162">E</text>
<text transform="scale(0.66,1)" x="402.73" y="162">S</text>
<text transform="scale(0.66,1)" x="471.82" y="162">S</text>
<text transform="scale(0.7,1)" x="453.71" y="162">E</text>
<text transform="scale(0.68,1)" x="476.18" y="162">N</text>
<text transform="scale(0.64,1)" x="515.63" y="162">D</text>
<text transform="scale(0.78,1)" x="472.31" y="162">F</text>
<text transform="scale(0.9,1)" x="416.22 423.11 430.00 457.56 485.11 498.89 505.78" y="162">uncnunc</text>
<text transform="scale(1.3,1)" x="302.46 383.54" y="162">tt</text>
<text transform="scale(0.96,1)" x="416.04" y="162">i</text>
<text transform="scale(0.82,1)" x="494.63 517.32 540.00 562.68 577.80 592.93" y="162">oeeeeo</text>
<text transform="scale(0.66,1)" x="633.33" y="162">S</text>
<text transform="scale(0.86,1)" x="500.47 558.14" y="162">qp</text>
<text transform="scale(0.64,1)" x="730.62" y="162">R</text>
<text transform="scale(1.32,1)" x="373.03" y="162">r</text>
<text transform="scale(0.9,1)" x="847.11 916.00" y="162">11</text>
<text transform="scale(0.84,1)" x="915.00 929.76" y="162">26</text>
<text transform="scale(0.82,1)" x="944.88 960.00 967.56 975.12" y="162">8358</text>
<text transform="scale(0.8,1)" x="1007.25 1015.00 1022.75" y="162">000</text>
<text transform="scale(0.72,1)" x="1153.61" y="162">B</text>
<rect x="955" y="157" width="5" height="1" fill="#000"/>
<text transform="scale(0.72,1)" x="1278.33 1338.61" y="162">BP</text>
<text transform="scale(0.58,1)" x="1597.59 1683.10" y="162">AA</text>
<text transform="scale(0.8,1)" x="1166.00" y="162">0</text>
<text transform="scale(0.76,1)" x="1235.53" y="162">4</text>
<text transform="scale(0.84,1)" x="1125.24" y="162">2</text>
<text transform="scale(0.82,1)" x="1160.24" y="162">5</text>
<text transform="scale(0.88,1)" x="1102.27" y="162">L</text>
<text transform="scale(0.9,1)" x="30.11" y="181">1</text>
<text transform="scale(0.8,1)" x="41.62" y="181">0</text>
<text transform="scale(0.82,1)" x="48.17" y="181">5</text>
<rect x="75" y="176" width="5" height="1" fill="#000"/>
<rect x="93" y="176" width="5" height="1" fill="#000"/>
<text transform="scale(0.84,1)" x="62.26 77.02 84.40 209.88" y="181">2227</text>
<text transform="scale(0.8,1)" x="73.12 104.12 158.38 173.87 181.62" y="181">00000</text>
<text transform="scale(0.76,1)" x="117.76 248.29" y="181">44</text>
<text transform="scale(0.9,1)" x="113.22 133.89 182.11" y="181">111</text>
<text transform="scale(0.82,1)" x="131.83 192.32 222.56" y="181">833</text>
<text transform="scale(0.96,1)" x="138.44 157.81 177.19" y="181">::.</text>
<text transform="scale(0.9,1)" x="236.11" y="181">I</text>
<text transform="scale(0.68,1)" x="321.62" y="181">N</text>
<text transform="scale(0.78,1)" x="288.33" y="181">F</text>
<text transform="scale(0.56,1)" x="412.68" y="181">O</text>
<text transform="scale(0.58,1)" x="436.90" y="181">M</text>
<text transform="scale(0.7,1)" x="370.86" y="181">E</text>
<text transform="scale(0.66,1)" x="402.73" y="181">S</text>
<text transform="scale(0.66,1)" x="471.82" y="181">S</text>
<text transform="scale(0.7,1)" x="453.71" y="181">E</text>
<text transform="scale(0.68,1)" x="476.18" y="181">N</text>
<text transform="scale(0.64,1)" x="515.63" y="181">D</text>
<text transform="scale(0.72,1)" x="511.67" y="181">P</text>
<text transform="scale(0.74,1)" x="506.22 556.49" y="181">aa</text>
<text transform="scale(0.9,1)" x="423.11" y="181">n</text>
<text transform="scale(0.82,1)" x="471.95 532.44 547.56" y="181">eeo</text>
<text transform="scale(0.96,1)" x="409.58" y="181">l</text>
<text transform="scale(0.66,1)" x="605.15" y="181">S</text>
<text transform="scale(1.3,1)" x="312.00 326.31 354.92" y="181">ttt</text>
<text transform="scale(1.32,1)" x="316.67 344.85" y="181">rr</text>
<text transform="scale(0.64,1)" x="672.50" y="181">R</text>
<text transform="scale(0.86,1)" x="514.88" y="181">p</text>
<text transform="scale(0.9,1)" x="847.11 916.00" y="181">11</text>
<text transform="scale(0.84,1)" x="915.00 929.76" y="181">26</text>
<text transform="scale(0.82,1)" x="944.88 960.00 967.56 975.12" y="181">8358</text>
<text transform="scale(0.8,1)" x="1007.25 1015.00 1022.75" y="181">000</text>
<text transform="scale(0.72,1)" x="1153.61" y="181">B</text>
<rect x="955" y="176" width="5" height="1" fill="#000"/>
<text transform="scale(0.72,1)" x="1278.33 1338.61" y="181">BP</text>
<text transform="scale(0.58,1)" x="1597.59 1683.10" y="181">AA</text>
<text transform="scale(0.8,1)" x="1166.00" y="181">0</text>
<text transform="scale(0.76,1)" x="1235.53" y="181">4</text>
<text transform="scale(0.84,1)" x="1125.24" y="181">2</text>
<text transform="scale(0.82,1)" x="1160.24" y="181">5</text>
<text transform="scale(0.88,1)" x="1102.27" y="181">L</text>
<text transform="scale(0.9,1)" x="20.56" y="200">1</text>
<text transform="scale(0.82,1)" x="30.12 37.68" y="200">33</text>
<rect x="75" y="195" width="5" height="1" fill="#000"/>
<rect x="93" y="195" width="5" height="1" fill="#000"/>
<text transform="scale(0.84,1)" x="62.26 77.02 84.40 209.88" y="200">2227</text>
<text transform="scale(0.8,1)" x="73.12 104.12 158.38 173.87 181.62" y="200">00000</text>
<text transform="scale(0.76,1)" x="117.76 248.29" y="200">44</text>
<text transform="scale(0.9,1)" x="113.22 133.89 182.11" y="200">111</text>
<text transform="scale(0.82,1)" x="131.83 192.32 222.56" y="200">833</text>
<text transform="scale(0.96,1)" x="138.44 157.81 177.19" y="200">::.</text>
<text transform="scale(0.9,1)" x="236.11" y="200">I</text>
<text transform="scale(0.68,1)" x="321.62" y="200">N</text>
<text transform="scale(0.78,1)" x="288.33" y="200">F</text>
<text transform="scale(0.56,1)" x="412.68" y="200">O</text>
<text transform="scale(0.7,1)" x="362.00" y="200">E</text>
<text transform="scale(0.56,1)" x="463.57" y="200">Q</text>
<text transform="scale(0.72,1)" x="369.17" y="200">P</text>
<text transform="scale(0.66,1)" x="471.82" y="200">S</text>
<text transform="scale(0.7,1)" x="453.71" y="200">E</text>
<text transform="scale(0.68,1)" x="476.18 485.29" y="200">NT</text>
<text transform="scale(0.66,1)" x="558.18" y="200">S</text>
<text transform="scale(0.84,1)" x="445.95 468.10" y="200">62</text>
<text transform="scale(0.78,1)" x="488.21" y="200">F</text>
<text transform="scale(0.9,1)" x="430.00" y="200">1</text>
<text transform="scale(0.9,1)" x="847.11 916.00" y="200">11</text>
<text transform="scale(0.84,1)" x="915.00 929.76" y="200">26</text>
<text transform="scale(0.82,1)" x="944.88 960.00 967.56 975.12" y="200">8358</text>
<text transform="scale(0.8,1)" x="1007.25 1015.00 1022.75" y="200">000</text>
<text transform="scale(0.72,1)" x="1153.61" y="200">B</text>
<rect x="955" y="195" width="5" height="1" fill="#000"/>
<text transform="scale(0.72,1)" x="1278.33 1338.61" y="200">BP</text>
<text transform="scale(0.58,1)" x="1597.59 1683.10" y="200">AA</text>
<text transform="scale(0.8,1)" x="1166.00" y="200">0</text>
<text transform="scale(0.76,1)" x="1235.53" y="200">4</text>
<text transform="scale(0.84,1)" x="1125.24" y="200">2</text>
<text transform="scale(0.82,1)" x="1160.24" y="200">5</text>
<text transform="scale(0.88,1)" x="1102.27" y="200">L</text>
<text transform="scale(0.9,1)" x="20.56" y="219">1</text>
<text transform="scale(0.82,1)" x="30.12" y="219">3</text>
<text transform="scale(0.84,1)" x="36.79" y="219">6</text>
<rect x="75" y="214" width="5" height="1" fill="#000"/>
<rect x="93" y="214" width="5" height="1" fill="#000"/>
<text transform="scale(0.84,1)" x="62.26 77.02 84.40 209.88" y="219">2227</text>
<text transform="scale(0.8,1)" x="73.12 104.12 158.38 173.87 181.62" y="219">00000</text>
<text transform="scale(0.76,1)" x="117.76 248.29" y="219">44</text>
<text transform="scale(0.9,1)" x="113.22 133.89 182.11" y="219">111</text>
<text transform="scale(0.82,1)" x="131.83 192.32 222.56" y="219">833</text>
<text transform="scale(0.96,1)" x="138.44 157.81 177.19" y="219">::.</text>
<text transform="scale(0.9,1)" x="236.11" y="219">I</text>
<text transform="scale(0.68,1)" x="321.62" y="219">N</text>
<text transform="scale(0.78,1)" x="288.33" y="219">F</text>
<text transform="scale(0.56,1)" x="412.68" y="219">O</text>
<text transform="scale(0.58,1)" x="436.90" y="219">M</text>
<text transform="scale(0.7,1)" x="370.86" y="219">E</text>
<text transform="scale(0.66,1)" x="402.73" y="219">S</text>
<text transform="scale(0.66,1)" x="471.82" y="219">S</text>
<text transform="scale(0.7,1)" x="453.71" y="219">E</text>
<text transform="scale(0.68,1)" x="476.18" y="219">N</text>
<text transform="scale(0.64,1)" x="515.63" y="219">D</text>
<text transform="scale(0.58,1)" x="635.17" y="219">M</text>
<text transform="scale(0.82,1)" x="456.83 487.07 540.00 555.12" y="219">oeeo</text>
<text transform="scale(0.86,1)" x="442.79 522.09" y="219">dp</text>
<text transform="scale(0.9,1)" x="430.00" y="219">u</text>
<text transform="scale(0.96,1)" x="409.58" y="219">l</text>
<text transform="scale(0.66,1)" x="614.55" y="219">S</text>
<text transform="scale(1.3,1)" x="316.77 331.08 359.69" y="219">ttt</text>
<text transform="scale(0.74,1)" x="564.86" y="219">a</text>
<text transform="scale(1.32,1)" x="321.36 349.55" y="219">rr</text>
<text transform="scale(0.64,1)" x="682.19" y="219">R</text>
<text transform="scale(0.9,1)" x="847.11 916.00" y="219">11</text>
<text transform="scale(0.84,1)" x="915.00 929.76" y="219">26</text>
<text transform="scale(0.82,1)" x="944.88 960.00 967.56 975.12" y="219">8358</text>
<text transform="scale(0.8,1)" x="1007.25 1015.00 1022.75" y="219">000</text>
<text transform="scale(0.72,1)" x="1153.61" y="219">B</text>
<rect x="955" y="214" width="5" height="1" fill="#000"/>
<text transform="scale(0.72,1)" x="1278.33 1338.61" y="219">BP</text>
<text transform="scale(0.58,1)" x="1597.59 1683.10" y="219">AA</text>
<text transform="scale(0.8,1)" x="1166.00" y="219">0</text>
<text transform="scale(0.76,1)" x="1235.53" y="219">4</text>
<text transform="scale(0.84,1)" x="1125.24" y="219">2</text>
<text transform="scale(0.82,1)" x="1160.24" y="219">5</text>
<text transform="scale(0.88,1)" x="1102.27" y="219">L</text>
<text transform="scale(0.9,1)" x="20.56" y="238">1</text>
<text transform="scale(0.84,1)" x="29.40" y="238">6</text>
<text transform="scale(0.76,1)" x="40.66" y="238">4</text>
<rect x="75" y="233" width="5" height="1" fill="#000"/>
<rect x="93" y="233" width="5" height="1" fill="#000"/>
<text transform="scale(0.84,1)" x="62.26 77.02 84.40 195.12" y="238">2226</text>
<text transform="scale(0.8,1)" x="73.12 104.12 158.38 173.87 181.62" y="238">00000</text>
<text transform="scale(0.76,1)" x="117.76" y="238">4</text>
<text transform="scale(0.9,1)" x="113.22 133.89 195.89" y="238">111</text>
<text transform="scale(0.82,1)" x="131.83 192.32 222.56 230.12" y="238">8388</text>
<text transform="scale(0.96,1)" x="138.44 157.81 177.19" y="238">::.</text>
<text transform="scale(0.9,1)" x="236.11" y="238">I</text>
<text transform="scale(0.68,1)" x="321.62" y="238">N</text>
<text transform="scale(0.78,1)" x="288.33" y="238">F</text>
<text transform="scale(0.56,1)" x="412.68" y="238">O</text>
<text transform="scale(0.7,1)" x="362.00" y="238">E</text>
<text transform="scale(0.56,1)" x="463.57" y="238">Q</text>
<text transform="scale(0.72,1)" x="369.17" y="238">P</text>
<text transform="scale(0.64,1)" x="486.56 554.38" y="238">RD</text>
<text transform="scale(0.7,1)" x="453.71 471.43 498.00" y="238">EEE</text>
<text transform="scale(0.6,1)" x="539.67" y="238">C</text>
<text transform="scale(0.58,1)" x="579.66" y="238">V</text>
<text transform="scale(0.9,1)" x="380.44" y="238">I</text>
<text transform="scale(0.66,1)" x="558.18" y="238">S</text>
<text transform="scale(0.84,1)" x="445.95" y="238">6</text>
<text transform="scale(0.78,1)" x="488.21" y="238">F</text>
<text transform="scale(0.9,1)" x="430.00 436.89" y="238">11</text>
<rect x="679" y="237" width="5" height="1" fill="#000"/>
<rect x="722" y="237" width="5" height="1" fill="#000"/>
<text transform="scale(0.6,1)" x="949.00" y="238">C</text>
<text transform="scale(0.7,1)" x="822.29 964.00 1026.00" y="238">EEE</text>
<text transform="scale(0.9,1)" x="646.44 674.00" y="238">I1</text>
<text transform="scale(0.64,1)" x="918.75 1025.31 1093.12" y="238">DRD</text>
<text transform="scale(0.96,1)" x="618.96" y="238">:</text>
<text transform="scale(0.84,1)" x="729.52" y="238">6</text>
<text transform="scale(0.66,1)" x="947.27 975.45" y="238">SS</text>
<text transform="scale(0.68,1)" x="928.53 955.88 983.24 1037.94 1083.53 1092.65" y="238">UTTUUT</text>
<text transform="scale(0.72,1)" x="885.56" y="238">B</text>
<text transform="scale(0.58,1)" x="1142.07 1184.83" y="238">AM</text>
<text transform="scale(0.56,1)" x="1238.21 1304.64" y="238">OO</text>
<text transform="scale(0.88,1)" x="809.09" y="238">L</text>
<text transform="scale(0.9,1)" x="847.11 916.00" y="238">11</text>
<text transform="scale(0.84,1)" x="915.00 929.76" y="238">26</text>
<text transform="scale(0.82,1)" x="944.88 960.00 967.56 975.12" y="238">8358</text>
<text transform="scale(0.8,1)" x="1007.25 1015.00 1022.75" y="238">000</text>
<text transform="scale(0.72,1)" x="1153.61" y="238">B</text>
<rect x="955" y="233" width="5" height="1" fill="#000"/>
<text transform="scale(0.72,1)" x="1278.33 1338.61" y="238">BP</text>
<text transform="scale(0.58,1)" x="1597.59 1683.10" y="238">AA</text>
<text transform="scale(0.8,1)" x="1166.00" y="238">0</text>
<text transform="scale(0.76,1)" x="1235.53" y="238">4</text>
<text transform="scale(0.84,1)" x="1125.24" y="238">2</text>
<text transform="scale(0.82,1)" x="1160.24" y="238">5</text>
<text transform="scale(0.88,1)" x="1102.27" y="238">L</text>
<text transform="scale(0.9,1)" x="20.56" y="257">1</text>
<text transform="scale(0.82,1)" x="30.12 37.68" y="257">83</text>
<rect x="75" y="252" width="5" height="1" fill="#000"/>
<rect x="93" y="252" width="5" height="1" fill="#000"/>
<text transform="scale(0.84,1)" x="62.26 77.02 84.40 195.12" y="257">2226</text>
<text transform="scale(0.8,1)" x="73.12 104.12 158.38 173.87 181.62" y="257">00000</text>
<text transform="scale(0.76,1)" x="117.76" y="257">4</text>
<text transform="scale(0.9,1)" x="113.22 133.89 195.89" y="257">111</text>
<text transform="scale(0.82,1)" x="131.83 192.32 222.56 230.12" y="257">8388</text>
<text transform="scale(0.96,1)" x="138.44 157.81 177.19" y="257">::.</text>
<text transform="scale(0.9,1)" x="236.11" y="257">I</text>
<text transform="scale(0.68,1)" x="321.62" y="257">N</text>
<text transform="scale(0.78,1)" x="288.33" y="257">F</text>
<text transform="scale(0.56,1)" x="412.68" y="257">O</text>
<text transform="scale(0.7,1)" x="362.00" y="257">E</text>
<text transform="scale(0.56,1)" x="463.57" y="257">Q</text>
<text transform="scale(0.72,1)" x="369.17" y="257">P</text>
<text transform="scale(0.64,1)" x="486.56 554.38" y="257">RD</text>
<text transform="scale(0.7,1)" x="453.71 471.43 498.00" y="257">EEE</text>
<text transform="scale(0.6,1)" x="539.67" y="257">C</text>
<text transform="scale(0.58,1)" x="579.66" y="257">V</text>
<text transform="scale(0.9,1)" x="380.44" y="257">I</text>
<text transform="scale(0.66,1)" x="558.18" y="257">S</text>
<text transform="scale(0.84,1)" x="445.95" y="257">6</text>
<text transform="scale(0.78,1)" x="488.21" y="257">F</text>
<text transform="scale(0.9,1)" x="430.00 436.89" y="257">11</text>
<rect x="679" y="256" width="5" height="1" fill="#000"/>
<rect x="710" y="256" width="5" height="1" fill="#000"/>
<text transform="scale(0.6,1)" x="949.00" y="257">C</text>
<text transform="scale(0.7,1)" x="822.29 964.00 1008.29" y="257">EEE</text>
<text transform="scale(0.9,1)" x="646.44 674.00 770.44" y="257">I1I</text>
<text transform="scale(0.64,1)" x="918.75 1025.31" y="257">DR</text>
<text transform="scale(0.96,1)" x="618.96" y="257">:</text>
<text transform="scale(0.76,1)" x="806.32" y="257">4</text>
<text transform="scale(0.66,1)" x="947.27 975.45" y="257">SS</text>
<text transform="scale(0.68,1)" x="928.53 955.88 983.24 1028.82 1065.29 1074.41" y="257">UTTNUT</text>
<text transform="scale(0.72,1)" x="885.56" y="257">B</text>
<text transform="scale(0.58,1)" x="1142.07" y="257">A</text>
<text transform="scale(0.88,1)" x="780.91" y="257">L</text>
<text transform="scale(0.56,1)" x="1282.50" y="257">O</text>
<text transform="scale(0.9,1)" x="847.11 916.00" y="257">11</text>
<text transform="scale(0.84,1)" x="915.00 929.76" y="257">26</text>
<text transform="scale(0.82,1)" x="944.88 960.00 967.56 975.12" y="257">8358</text>
<text transform="scale(0.8,1)" x="1007.25 1015.00 1022.75" y="257">000</text>
<text transform="scale(0.72,1)" x="1153.61" y="257">B</text>
<rect x="955" y="252" width="5" height="1" fill="#000"/>
<text transform="scale(0.72,1)" x="1278.33 1338.61" y="257">BP</text>
<text transform="scale(0.58,1)" x="1597.59 1683.10" y="257">AA</text>
<text transform="scale(0.8,1)" x="1166.00" y="257">0</text>
<text transform="scale(0.76,1)" x="1235.53" y="257">4</text>
<text transform="scale(0.84,1)" x="1125.24" y="257">2</text>
<text transform="scale(0.82,1)" x="1160.24" y="257">5</text>
<text transform="scale(0.88,1)" x="1102.27" y="257">L</text>
<text transform="scale(0.84,1)" x="22.02" y="276">2</text>
<text transform="scale(0.8,1)" x="30.87" y="276">0</text>
<text transform="scale(0.76,1)" x="40.66" y="276">4</text>
<rect x="75" y="271" width="5" height="1" fill="#000"/>
<rect x="93" y="271" width="5" height="1" fill="#000"/>
<text transform="scale(0.84,1)" x="62.26 77.02 84.40 195.12" y="276">2226</text>
<text transform="scale(0.8,1)" x="73.12 104.12 158.38 173.87 181.62" y="276">00000</text>
<text transform="scale(0.76,1)" x="117.76" y="276">4</text>
<text transform="scale(0.9,1)" x="113.22 133.89 195.89" y="276">111</text>
<text transform="scale(0.82,1)" x="131.83 192.32 222.56 230.12" y="276">8388</text>
<text transform="scale(0.96,1)" x="138.44 157.81 177.19" y="276">::.</text>
<text transform="scale(0.9,1)" x="236.11" y="276">I</text>
<text transform="scale(0.68,1)" x="321.62" y="276">N</text>
<text transform="scale(0.78,1)" x="288.33" y="276">F</text>
<text transform="scale(0.56,1)" x="412.68" y="276">O</text>
<text transform="scale(0.7,1)" x="362.00" y="276">E</text>
<text transform="scale(0.56,1)" x="463.57" y="276">Q</text>
<text transform="scale(0.72,1)" x="369.17" y="276">P</text>
<text transform="scale(0.64,1)" x="486.56 554.38" y="276">RD</text>
<text transform="scale(0.7,1)" x="453.71 471.43 498.00" y="276">EEE</text>
<text transform="scale(0.6,1)" x="539.67" y="276">C</text>
<text transform="scale(0.58,1)" x="579.66" y="276">V</text>
<text transform="scale(0.9,1)" x="380.44" y="276">I</text>
<text transform="scale(0.66,1)" x="558.18" y="276">S</text>
<text transform="scale(0.84,1)" x="445.95" y="276">6</text>
<text transform="scale(0.78,1)" x="488.21" y="276">F</text>
<text transform="scale(0.9,1)" x="430.00 436.89" y="276">11</text>
<rect x="679" y="275" width="5" height="1" fill="#000"/>
<rect x="728" y="275" width="5" height="1" fill="#000"/>
<text transform="scale(0.6,1)" x="949.00 1145.33" y="276">CC</text>
<text transform="scale(0.7,1)" x="822.29 964.00 1026.00" y="276">EEE</text>
<text transform="scale(0.9,1)" x="646.44 674.00 680.89 791.11 818.67" y="276">I11II</text>
<text transform="scale(0.64,1)" x="918.75 1025.31 1093.12 1102.81 1131.88" y="276">DRRRR</text>
<text transform="scale(0.96,1)" x="618.96" y="276">:</text>
<text transform="scale(0.66,1)" x="947.27 975.45" y="276">SS</text>
<text transform="scale(0.68,1)" x="928.53 955.88 983.24 1092.65" y="276">UTTN</text>
<text transform="scale(0.72,1)" x="885.56" y="276">B</text>
<text transform="scale(0.58,1)" x="1142.07 1195.52" y="276">AA</text>
<text transform="scale(0.9,1)" x="847.11 916.00" y="276">11</text>
<text transform="scale(0.84,1)" x="915.00 929.76" y="276">26</text>
<text transform="scale(0.82,1)" x="944.88 960.00 967.56 975.12" y="276">8358</text>
<text transform="scale(0.8,1)" x="1007.25 1015.00 1022.75" y="276">000</text>
<text transform="scale(0.72,1)" x="1153.61" y="276">B</text>
<rect x="955" y="271" width="5" height="1" fill="#000"/>
<text transform="scale(0.72,1)" x="1278.33 1338.61" y="276">BP</text>
<text transform="scale(0.58,1)" x="1597.59 1683.10" y="276">AA</text>
<text transform="scale(0.8,1)" x="1166.00" y="276">0</text>
<text transform="scale(0.76,1)" x="1235.53" y="276">4</text>
<text transform="scale(0.84,1)" x="1125.24" y="276">2</text>
<text transform="scale(0.82,1)" x="1160.24" y="276">5</text>
<text transform="scale(0.88,1)" x="1102.27" y="276">L</text>
<text transform="scale(0.84,1)" x="22.02 29.40" y="295">22</text>
<text transform="scale(0.9,1)" x="34.33" y="295">1</text>
<rect x="75" y="290" width="5" height="1" fill="#000"/>
<rect x="93" y="290" width="5" height="1" fill="#000"/>
<text transform="scale(0.84,1)" x="62.26 77.02 84.40 195.12" y="295">2226</text>
<text transform="scale(0.8,1)" x="73.12 104.12 158.38 173.87 181.62" y="295">00000</text>
<text transform="scale(0.76,1)" x="117.76" y="295">4</text>
<text transform="scale(0.9,1)" x="113.22 133.89 195.89" y="295">111</text>
<text transform="scale(0.82,1)" x="131.83 192.32 222.56 230.12" y="295">8388</text>
<text transform="scale(0.96,1)" x="138.44 157.81 177.19" y="295">::.</text>
<text transform="scale(0.9,1)" x="236.11" y="295">I</text>
<text transform="scale(0.68,1)" x="321.62" y="295">N</text>
<text transform="scale(0.78,1)" x="288.33" y="295">F</text>
<text transform="scale(0.56,1)" x="412.68" y="295">O</text>
<text transform="scale(0.7,1)" x="362.00" y="295">E</text>
<text transform="scale(0.56,1)" x="463.57" y="295">Q</text>
<text transform="scale(0.72,1)" x="369.17" y="295">P</text>
<text transform="scale(0.66,1)" x="471.82" y="295">S</text>
<text transform="scale(0.7,1)" x="453.71" y="295">E</text>
<text transform="scale(0.68,1)" x="476.18 485.29" y="295">NT</text>
<text transform="scale(0.66,1)" x="558.18" y="295">S</text>
<text transform="scale(0.84,1)" x="445.95 468.10" y="295">62</text>
<text transform="scale(0.78,1)" x="488.21" y="295">F</text>
<text transform="scale(0.9,1)" x="430.00" y="295">1</text>
<text transform="scale(0.9,1)" x="847.11 916.00" y="295">11</text>
<text transform="scale(0.84,1)" x="915.00 929.76" y="295">26</text>
<text transform="scale(0.82,1)" x="944.88 960.00 967.56 975.12" y="295">8358</text>
<text transform="scale(0.8,1)" x="1007.25 1015.00 1022.75" y="295">000</text>
<text transform="scale(0.72,1)" x="1153.61" y="295">B</text>
<rect x="955" y="290" width="5" height="1" fill="#000"/>
<text transform="scale(0.72,1)" x="1278.33 1338.61" y="295">BP</text>
<text transform="scale(0.58,1)" x="1597.59 1683.10" y="295">AA</text>
<text transform="scale(0.8,1)" x="1166.00" y="295">0</text>
<text transform="scale(0.76,1)" x="1235.53" y="295">4</text>
<text transform="scale(0.84,1)" x="1125.24" y="295">2</text>
<text transform="scale(0.82,1)" x="1160.24" y="295">5</text>
<text transform="scale(0.88,1)" x="1102.27" y="295">L</text>
<text transform="scale(0.84,1)" x="22.02 29.40" y="314">22</text>
<text transform="scale(0.76,1)" x="40.66" y="314">4</text>
<rect x="75" y="309" width="5" height="1" fill="#000"/>
<rect x="93" y="309" width="5" height="1" fill="#000"/>
<text transform="scale(0.84,1)" x="62.26 77.02 84.40 195.12" y="314">2226</text>
<text transform="scale(0.8,1)" x="73.12 104.12 158.38 173.87 181.62" y="314">00000</text>
<text transform="scale(0.76,1)" x="117.76" y="314">4</text>
<text transform="scale(0.9,1)" x="113.22 133.89 195.89" y="314">111</text>
<text transform="scale(0.82,1)" x="131.83 192.32 222.56 230.12" y="314">8388</text>
<text transform="scale(0.96,1)" x="138.44 157.81 177.19" y="314">::.</text>
<text transform="scale(0.9,1)" x="236.11" y="314">I</text>
<text transform="scale(0.68,1)" x="321.62" y="314">N</text>
<text transform="scale(0.78,1)" x="288.33" y="314">F</text>
<text transform="scale(0.56,1)" x="412.68" y="314">O</text>
<text transform="scale(0.58,1)" x="436.90" y="314">M</text>
<text transform="scale(0.7,1)" x="370.86" y="314">E</text>
<text transform="scale(0.66,1)" x="402.73" y="314">S</text>
<text transform="scale(0.66,1)" x="471.82" y="314">S</text>
<text transform="scale(0.7,1)" x="453.71" y="314">E</text>
<text transform="scale(0.68,1)" x="476.18" y="314">N</text>
<text transform="scale(0.64,1)" x="515.63" y="314">D</text>
<text transform="scale(0.58,1)" x="635.17" y="314">M</text>
<text transform="scale(0.82,1)" x="456.83 487.07 524.88 540.00" y="314">oeeo</text>
<text transform="scale(0.86,1)" x="442.79 486.05 507.67" y="314">ddp</text>
<text transform="scale(0.9,1)" x="430.00 457.56" y="314">un</text>
<text transform="scale(0.96,1)" x="409.58" y="314">l</text>
<text transform="scale(0.7,1)" x="579.43" y="314">E</text>
<text transform="scale(0.64,1)" x="662.81" y="314">R</text>
<text transform="scale(1.32,1)" x="340.15" y="314">r</text>
<text transform="scale(1.3,1)" x="350.15" y="314">t</text>
<text transform="scale(0.9,1)" x="847.11 916.00" y="314">11</text>
<text transform="scale(0.84,1)" x="915.00 929.76" y="314">26</text>
<text transform="scale(0.82,1)" x="944.88 960.00 967.56 975.12" y="314">8358</text>
<text transform="scale(0.8,1)" x="1007.25 1015.00 1022.75" y="314">000</text>
<text transform="scale(0.72,1)" x="1153.61" y="314">B</text>
<rect x="955" y="309" width="5" height="1" fill="#000"/>
<text transform="scale(0.72,1)" x="1278.33 1338.61" y="314">BP</text>
<text transform="scale(0.58,1)" x="1597.59 1683.10" y="314">AA</text>
<text transform="scale(0.8,1)" x="1166.00" y="314">0</text>
<text transform="scale(0.76,1)" x="1235.53" y="314">4</text>
<text transform="scale(0.84,1)" x="1125.24" y="314">2</text>
<text transform="scale(0.82,1)" x="1160.24" y="314">5</text>
<text transform="scale(0.88,1)" x="1102.27" y="314">L</text>
<text transform="scale(0.84,1)" x="22.02 36.79" y="333">22</text>
<text transform="scale(0.82,1)" x="30.12" y="333">5</text>
<rect x="75" y="328" width="5" height="1" fill="#000"/>
<rect x="93" y="328" width="5" height="1" fill="#000"/>
<text transform="scale(0.84,1)" x="62.26 77.02 84.40 195.12" y="333">2226</text>
<text transform="scale(0.8,1)" x="73.12 104.12 158.38 173.87 181.62" y="333">00000</text>
<text transform="scale(0.76,1)" x="117.76" y="333">4</text>
<text transform="scale(0.9,1)" x="113.22 133.89 195.89" y="333">111</text>
<text transform="scale(0.82,1)" x="131.83 192.32 222.56 230.12" y="333">8388</text>
<text transform="scale(0.96,1)" x="138.44 157.81 177.19" y="333">::.</text>
<text transform="scale(0.9,1)" x="236.11" y="333">I</text>
<text transform="scale(0.68,1)" x="321.62" y="333">N</text>
<text transform="scale(0.78,1)" x="288.33" y="333">F</text>
<text transform="scale(0.56,1)" x="412.68" y="333">O</text>
<text transform="scale(0.7,1)" x="362.00" y="333">E</text>
<text transform="scale(0.56,1)" x="463.57" y="333">Q</text>
<text transform="scale(0.72,1)" x="369.17" y="333">P</text>
<text transform="scale(0.66,1)" x="471.82" y="333">S</text>
<text transform="scale(0.7,1)" x="453.71" y="333">E</text>
<text transform="scale(0.68,1)" x="476.18 485.29" y="333">NT</text>
<text transform="scale(0.66,1)" x="558.18" y="333">S</text>
<text transform="scale(0.84,1)" x="445.95 468.10" y="333">62</text>
<text transform="scale(0.78,1)" x="488.21" y="333">F</text>
<text transform="scale(0.9,1)" x="430.00" y="333">1</text>
<text transform="scale(0.9,1)" x="847.11 916.00" y="333">11</text>
<text transform="scale(0.84,1)" x="915.00 929.76" y="333">26</text>
<text transform="scale(0.82,1)" x="944.88 960.00 967.56 975.12" y="333">8358</text>
<text transform="scale(0.8,1)" x="1007.25 1015.00 1022.75" y="333">000</text>
<text transform="scale(0.72,1)" x="1153.61" y="333">B</text>
<rect x="955" y="328" width="5" height="1" fill="#000"/>
<text transform="scale(0.72,1)" x="1278.33 1338.61" y="333">BP</text>
<text transform="scale(0.58,1)" x="1597.59 1683.10" y="333">AA</text>
<text transform="scale(0.8,1)" x="1166.00" y="333">0</text>
<text transform="scale(0.76,1)" x="1235.53" y="333">4</text>
<text transform="scale(0.84,1)" x="1125.24" y="333">2</text>
<text transform="scale(0.82,1)" x="1160.24" y="333">5</text>
<text transform="scale(0.88,1)" x="1102.27" y="333">L</text>
<text transform="scale(0.84,1)" x="22.02" y="352">2</text>
<text transform="scale(0.82,1)" x="30.12 37.68" y="352">55</text>
<rect x="75" y="347" width="5" height="1" fill="#000"/>
<rect x="93" y="347" width="5" height="1" fill="#000"/>
<text transform="scale(0.84,1)" x="62.26 77.02 84.40 195.12" y="352">2226</text>
<text transform="scale(0.8,1)" x="73.12 104.12 158.38 173.87 181.62" y="352">00000</text>
<text transform="scale(0.76,1)" x="117.76" y="352">4</text>
<text transform="scale(0.9,1)" x="113.22 133.89 195.89" y="352">111</text>
<text transform="scale(0.82,1)" x="131.83 192.32 222.56 230.12" y="352">8388</text>
<text transform="scale(0.96,1)" x="138.44 157.81 177.19" y="352">::.</text>
<text transform="scale(0.9,1)" x="236.11" y="352">I</text>
<text transform="scale(0.68,1)" x="321.62" y="352">N</text>
<text transform="scale(0.78,1)" x="288.33" y="352">F</text>
<text transform="scale(0.56,1)" x="412.68" y="352">O</text>
<text transform="scale(0.58,1)" x="436.90" y="352">M</text>
<text transform="scale(0.7,1)" x="370.86" y="352">E</text>
<text transform="scale(0.66,1)" x="402.73" y="352">S</text>
<text transform="scale(0.66,1)" x="471.82" y="352">S</text>
<text transform="scale(0.7,1)" x="453.71" y="352">E</text>
<text transform="scale(0.68,1)" x="476.18" y="352">N</text>
<text transform="scale(0.64,1)" x="515.63" y="352">D</text>
<text transform="scale(0.78,1)" x="472.31" y="352">F</text>
<text transform="scale(0.9,1)" x="416.22 423.11 430.00 457.56 485.11 498.89 505.78" y="352">uncnunc</text>
<text transform="scale(1.3,1)" x="302.46 383.54" y="352">tt</text>
<text transform="scale(0.96,1)" x="416.04" y="352">i</text>
<text transform="scale(0.82,1)" x="494.63 517.32 540.00 562.68 577.80 592.93" y="352">oeeeeo</text>
<text transform="scale(0.66,1)" x="633.33" y="352">S</text>
<text transform="scale(0.86,1)" x="500.47 558.14" y="352">qp</text>
<text transform="scale(0.64,1)" x="730.62" y="352">R</text>
<text transform="scale(1.32,1)" x="373.03" y="352">r</text>
<text transform="scale(0.9,1)" x="847.11 916.00" y="352">11</text>
<text transform="scale(0.84,1)" x="915.00 929.76" y="352">26</text>
<text transform="scale(0.82,1)" x="944.88 960.00 967.56 975.12" y="352">8358</text>
<text transform="scale(0.8,1)" x="1007.25 1015.00 1022.75" y="352">000</text>
<text transform="scale(0.72,1)" x="1153.61" y="352">B</text>
<rect x="955" y="347" width="5" height="1" fill="#000"/>
<text transform="scale(0.72,1)" x="1278.33 1338.61" y="352">BP</text>
<text transform="scale(0.58,1)" x="1597.59 1683.10" y="352">AA</text>
<text transform="scale(0.8,1)" x="1166.00" y="352">0</text>
<text transform="scale(0.76,1)" x="1235.53" y="352">4</text>
<text transform="scale(0.84,1)" x="1125.24" y="352">2</text>
<text transform="scale(0.82,1)" x="1160.24" y="352">5</text>
<text transform="scale(0.88,1)" x="1102.27" y="352">L</text>
<text transform="scale(0.84,1)" x="22.02 36.79" y="371">22</text>
<text transform="scale(0.82,1)" x="30.12" y="371">8</text>
<rect x="75" y="366" width="5" height="1" fill="#000"/>
<rect x="93" y="366" width="5" height="1" fill="#000"/>
<text transform="scale(0.84,1)" x="62.26 77.02 84.40 195.12" y="371">2226</text>
<text transform="scale(0.8,1)" x="73.12 104.12 158.38 173.87 181.62" y="371">00000</text>
<text transform="scale(0.76,1)" x="117.76" y="371">4</text>
<text transform="scale(0.9,1)" x="113.22 133.89 195.89" y="371">111</text>
<text transform="scale(0.82,1)" x="131.83 192.32 222.56 230.12" y="371">8388</text>
<text transform="scale(0.96,1)" x="138.44 157.81 177.19" y="371">::.</text>
<text transform="scale(0.9,1)" x="236.11" y="371">I</text>
<text transform="scale(0.68,1)" x="321.62" y="371">N</text>
<text transform="scale(0.78,1)" x="288.33" y="371">F</text>
<text transform="scale(0.56,1)" x="412.68" y="371">O</text>
<text transform="scale(0.58,1)" x="436.90" y="371">M</text>
<text transform="scale(0.7,1)" x="370.86" y="371">E</text>
<text transform="scale(0.66,1)" x="402.73" y="371">S</text>
<text transform="scale(0.66,1)" x="471.82" y="371">S</text>
<text transform="scale(0.7,1)" x="453.71" y="371">E</text>
<text transform="scale(0.68,1)" x="476.18" y="371">N</text>
<text transform="scale(0.64,1)" x="515.63" y="371">D</text>
<text transform="scale(0.72,1)" x="511.67" y="371">P</text>
<text transform="scale(0.74,1)" x="506.22" y="371">a</text>
<text transform="scale(0.9,1)" x="423.11 450.67" y="371">nn</text>
<text transform="scale(0.82,1)" x="471.95 517.32 532.44" y="371">eeo</text>
<text transform="scale(0.96,1)" x="409.58" y="371">l</text>
<text transform="scale(0.7,1)" x="570.57" y="371">E</text>
<text transform="scale(0.86,1)" x="478.84 500.47" y="371">dp</text>
<text transform="scale(0.64,1)" x="653.13" y="371">R</text>
<text transform="scale(1.32,1)" x="335.45" y="371">r</text>
<text transform="scale(1.3,1)" x="345.38" y="371">t</text>
<text transform="scale(0.9,1)" x="847.11 916.00" y="371">11</text>
<text transform="scale(0.84,1)" x="915.00 929.76" y="371">26</text>
<text transform="scale(0.82,1)" x="944.88 960.00 967.56 975.12" y="371">8358</text>
<text transform="scale(0.8,1)" x="1007.25 1015.00 1022.75" y="371">000</text>
<text transform="scale(0.72,1)" x="1153.61" y="371">B</text>
<rect x="955" y="366" width="5" height="1" fill="#000"/>
<text transform="scale(0.72,1)" x="1278.33 1338.61" y="371">BP</text>
<text transform="scale(0.58,1)" x="1597.59 1683.10" y="371">AA</text>
<text transform="scale(0.8,1)" x="1166.00" y="371">0</text>
<text transform="scale(0.76,1)" x="1235.53" y="371">4</text>
<text transform="scale(0.84,1)" x="1125.24" y="371">2</text>
<text transform="scale(0.82,1)" x="1160.24" y="371">5</text>
<text transform="scale(0.88,1)" x="1102.27" y="371">L</text>
<text transform="scale(0.82,1)" x="22.56" y="390">3</text>
<text transform="scale(0.9,1)" x="27.44" y="390">1</text>
<text transform="scale(0.8,1)" x="38.62" y="390">0</text>
<rect x="75" y="385" width="5" height="1" fill="#000"/>
<rect x="93" y="385" width="5" height="1" fill="#000"/>
<text transform="scale(0.84,1)" x="62.26 77.02 84.40 195.12 209.88" y="390">22262</text>
<text transform="scale(0.8,1)" x="73.12 104.12 158.38 173.87 181.62 228.13" y="390">000000</text>
<text transform="scale(0.76,1)" x="117.76" y="390">4</text>
<text transform="scale(0.9,1)" x="113.22 133.89" y="390">11</text>
<text transform="scale(0.82,1)" x="131.83 192.32 230.12" y="390">833</text>
<text transform="scale(0.96,1)" x="138.44 157.81 177.19" y="390">::.</text>
<text transform="scale(0.9,1)" x="236.11" y="390">I</text>
<text transform="scale(0.68,1)" x="321.62" y="390">N</text>
<text transform="scale(0.78,1)" x="288.33" y="390">F</text>
<text transform="scale(0.56,1)" x="412.68" y="390">O</text>
<text transform="scale(0.7,1)" x="362.00" y="390">E</text>
<text transform="scale(0.56,1)" x="463.57" y="390">Q</text>
<text transform="scale(0.72,1)" x="369.17" y="390">P</text>
<text transform="scale(0.66,1)" x="471.82" y="390">S</text>
<text transform="scale(0.7,1)" x="453.71" y="390">E</text>
<text transform="scale(0.68,1)" x="476.18 485.29" y="390">NT</text>
<text transform="scale(0.66,1)" x="558.18" y="390">S</text>
<text transform="scale(0.84,1)" x="445.95 468.10" y="390">62</text>
<text transform="scale(0.78,1)" x="488.21" y="390">F</text>
<text transform="scale(0.9,1)" x="430.00" y="390">1</text>
<text transform="scale(0.9,1)" x="847.11 916.00" y="390">11</text>
<text transform="scale(0.84,1)" x="915.00 929.76" y="390">26</text>
<text transform="scale(0.82,1)" x="944.88 960.00 967.56 975.12" y="390">8358</text>
<text transform="scale(0.8,1)" x="1007.25 1015.00 1022.75" y="390">000</text>
<text transform="scale(0.72,1)" x="1153.61" y="390">B</text>
<rect x="955" y="385" width="5" height="1" fill="#000"/>
<text transform="scale(0.72,1)" x="1278.33 1338.61" y="390">BP</text>
<text transform="scale(0.58,1)" x="1597.59 1683.10" y="390">AA</text>
<text transform="scale(0.8,1)" x="1166.00" y="390">0</text>
<text transform="scale(0.76,1)" x="1235.53" y="390">4</text>
<text transform="scale(0.84,1)" x="1125.24" y="390">2</text>
<text transform="scale(0.82,1)" x="1160.24" y="390">5</text>
<text transform="scale(0.88,1)" x="1102.27" y="390">L</text>
<text transform="scale(0.82,1)" x="22.56" y="409">3</text>
<text transform="scale(0.84,1)" x="29.40" y="409">2</text>
<text transform="scale(0.9,1)" x="34.33" y="409">1</text>
<rect x="75" y="404" width="5" height="1" fill="#000"/>
<rect x="93" y="404" width="5" height="1" fill="#000"/>
<text transform="scale(0.84,1)" x="62.26 77.02 84.40" y="409">222</text>
<text transform="scale(0.8,1)" x="73.12 104.12 158.38 173.87 181.62" y="409">00000</text>
<text transform="scale(0.76,1)" x="117.76 240.13 248.29" y="409">444</text>
<text transform="scale(0.9,1)" x="113.22 133.89" y="409">11</text>
<text transform="scale(0.82,1)" x="131.83 192.32 199.88 215.00" y="409">8533</text>
<text transform="scale(0.96,1)" x="138.44 157.81 177.19" y="409">::.</text>
<text transform="scale(0.9,1)" x="236.11" y="409">I</text>
<text transform="scale(0.68,1)" x="321.62" y="409">N</text>
<text transform="scale(0.78,1)" x="288.33" y="409">F</text>
<text transform="scale(0.56,1)" x="412.68" y="409">O</text>
<text transform="scale(0.7,1)" x="362.00" y="409">E</text>
<text transform="scale(0.56,1)" x="463.57" y="409">Q</text>
<text transform="scale(0.72,1)" x="369.17" y="409">P</text>
<text transform="scale(0.64,1)" x="486.56 554.38" y="409">RD</text>
<text transform="scale(0.7,1)" x="453.71 471.43 498.00" y="409">EEE</text>
<text transform="scale(0.6,1)" x="539.67" y="409">C</text>
<text transform="scale(0.58,1)" x="579.66" y="409">V</text>
<text transform="scale(0.9,1)" x="380.44" y="409">I</text>
<text transform="scale(0.66,1)" x="558.18" y="409">S</text>
<text transform="scale(0.82,1)" x="456.83" y="409">5</text>
<text transform="scale(0.78,1)" x="488.21" y="409">F</text>
<text transform="scale(0.9,1)" x="430.00" y="409">1</text>
<text transform="scale(0.82,1)" x="22.56" y="428">3</text>
<text transform="scale(0.84,1)" x="29.40 36.79" y="428">27</text>
<rect x="75" y="423" width="5" height="1" fill="#000"/>
<rect x="93" y="423" width="5" height="1" fill="#000"/>
<text transform="scale(0.84,1)" x="62.26 77.02 84.40" y="428">222</text>
<text transform="scale(0.8,1)" x="73.12 104.12 158.38 173.87 181.62" y="428">00000</text>
<text transform="scale(0.76,1)" x="117.76 240.13 248.29" y="428">444</text>
<text transform="scale(0.9,1)" x="113.22 133.89" y="428">11</text>
<text transform="scale(0.82,1)" x="131.83 192.32 199.88 215.00" y="428">8533</text>
<text transform="scale(0.96,1)" x="138.44 157.81 177.19" y="428">::.</text>
<text transform="scale(0.9,1)" x="236.11" y="428">I</text>
<text transform="scale(0.68,1)" x="321.62" y="428">N</text>
<text transform="scale(0.78,1)" x="288.33" y="428">F</text>
<text transform="scale(0.56,1)" x="412.68" y="428">O</text>
<text transform="scale(0.7,1)" x="362.00" y="428">E</text>
<text transform="scale(0.56,1)" x="463.57" y="428">Q</text>
<text transform="scale(0.72,1)" x="369.17" y="428">P</text>
<text transform="scale(0.66,1)" x="471.82" y="428">S</text>
<text transform="scale(0.7,1)" x="453.71" y="428">E</text>
<text transform="scale(0.68,1)" x="476.18 485.29" y="428">NT</text>
<text transform="scale(0.66,1)" x="558.18" y="428">S</text>
<text transform="scale(0.82,1)" x="456.83" y="428">5</text>
<text transform="scale(0.78,1)" x="488.21" y="428">F</text>
<text transform="scale(0.84,1)" x="460.71" y="428">2</text>
<text transform="scale(0.82,1)" x="22.56 30.12" y="447">33</text>
<text transform="scale(0.8,1)" x="38.62" y="447">0</text>
<rect x="75" y="442" width="5" height="1" fill="#000"/>
<rect x="93" y="442" width="5" height="1" fill="#000"/>
<text transform="scale(0.84,1)" x="62.26 77.02 84.40" y="447">222</text>
<text transform="scale(0.8,1)" x="73.12 104.12 158.38 173.87 181.62" y="447">00000</text>
<text transform="scale(0.76,1)" x="117.76 240.13 248.29" y="447">444</text>
<text transform="scale(0.9,1)" x="113.22 133.89" y="447">11</text>
<text transform="scale(0.82,1)" x="131.83 192.32 199.88 215.00" y="447">8533</text>
<text transform="scale(0.96,1)" x="138.44 157.81 177.19" y="447">::.</text>
<text transform="scale(0.9,1)" x="236.11" y="447">I</text>
<text transform="scale(0.68,1)" x="321.62" y="447">N</text>
<text transform="scale(0.78,1)" x="288.33" y="447">F</text>
<text transform="scale(0.56,1)" x="412.68" y="447">O</text>
<text transform="scale(0.78,1)" x="324.87" y="447">F</text>
<text transform="scale(0.64,1)" x="405.62" y="447">D</text>
<text transform="scale(0.6,1)" x="443.00" y="447">C</text>
<text transform="scale(0.66,1)" x="471.82" y="447">S</text>
<text transform="scale(0.7,1)" x="453.71" y="447">E</text>
<text transform="scale(0.68,1)" x="476.18" y="447">N</text>
<text transform="scale(0.64,1)" x="515.63" y="447">D</text>
<text transform="scale(0.58,1)" x="635.17" y="447">A</text>
<text transform="scale(0.96,1)" x="390.21" y="447">l</text>
<text transform="scale(0.74,1)" x="514.59" y="447">a</text>
<text transform="scale(1.32,1)" x="293.18 321.36" y="447">rr</text>
<text transform="scale(0.54,1)" x="728.15" y="447">m</text>
<text transform="scale(0.64,1)" x="624.06" y="447">R</text>
<text transform="scale(0.82,1)" x="494.63 509.76" y="447">eo</text>
<text transform="scale(0.86,1)" x="478.84" y="447">p</text>
<text transform="scale(1.3,1)" x="331.08" y="447">t</text>
<rect x="598" y="442" width="5" height="1" fill="#000"/>
<text transform="scale(0.9,1)" x="632.67 639.56" y="447">11</text>
<text transform="scale(0.84,1)" x="692.62" y="447">6</text>
<text transform="scale(0.76,1)" x="773.68" y="447">4</text>
<text transform="scale(0.66,1)" x="928.48" y="447">S</text>
<text transform="scale(0.7,1)" x="884.29" y="447">E</text>
<text transform="scale(0.68,1)" x="919.41" y="447">T</text>
<rect x="955" y="442" width="5" height="1" fill="#000"/>
<text transform="scale(0.72,1)" x="1278.33 1338.61" y="447">BP</text>
<text transform="scale(0.58,1)" x="1597.59 1683.10" y="447">AA</text>
<text transform="scale(0.8,1)" x="1166.00" y="447">0</text>
<text transform="scale(0.76,1)" x="1235.53" y="447">4</text>
<text transform="scale(0.84,1)" x="1125.24" y="447">2</text>
<text transform="scale(0.82,1)" x="1160.24" y="447">5</text>
<text transform="scale(0.88,1)" x="1102.27" y="447">L</text>
</g></svg>
</div></body></html>
